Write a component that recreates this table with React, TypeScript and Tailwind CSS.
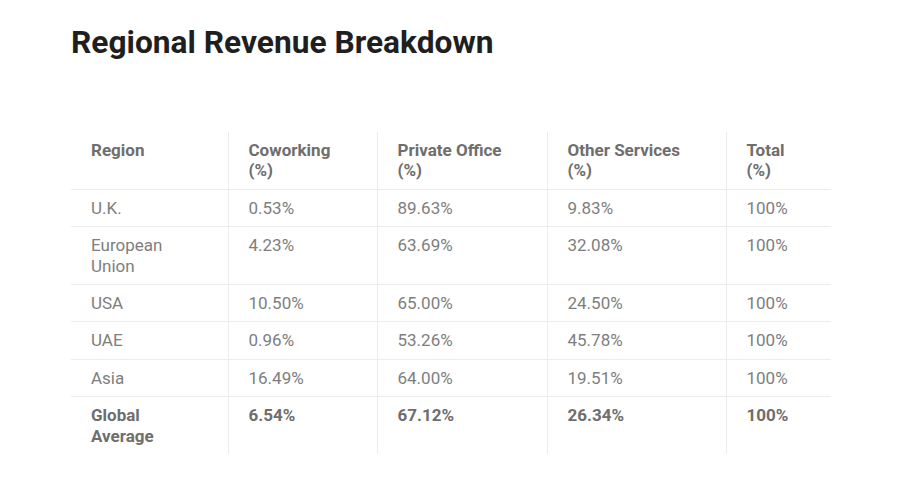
import React from "react";

type Row = { region: React.ReactNode; c: string; p: string; o: string; t: string; bold?: boolean };

const rows: Row[] = [
  { region: "U.K.", c: "0.53%", p: "89.63%", o: "9.83%", t: "100%" },
  { region: <>European<br />Union</>, c: "4.23%", p: "63.69%", o: "32.08%", t: "100%" },
  { region: "USA", c: "10.50%", p: "65.00%", o: "24.50%", t: "100%" },
  { region: "UAE", c: "0.96%", p: "53.26%", o: "45.78%", t: "100%" },
  { region: "Asia", c: "16.49%", p: "64.00%", o: "19.51%", t: "100%" },
  { region: <>Global<br />Average</>, c: "6.54%", p: "67.12%", o: "26.34%", t: "100%", bold: true },
];

const headers: React.ReactNode[] = [
  "Region",
  <>Coworking<br />(%)</>,
  <>Private Office<br />(%)</>,
  <>Other Services<br />(%)</>,
  <>Total<br />(%)</>,
];
const widths = ["w-[157px]", "w-[149px]", "w-[170px]", "w-[179px]", "w-[105px]"];

export default function App() {
  return (
    <div className="min-h-[479px] w-[900px] bg-white px-[71px] pt-[24px]" style={{ fontFamily: "Roboto, 'Liberation Sans', sans-serif" }}>
      <h1 className="text-[31.7px] leading-[38px] font-bold text-[#1f1f1f]">Regional Revenue Breakdown</h1>
      <table className="mt-[70px] w-[760px] table-fixed border-collapse text-[17px] leading-[1.2]">
        <colgroup>
          {widths.map((w, i) => (
            <col key={i} className={w} />
          ))}
        </colgroup>
        <thead>
          <tr className="border-b border-[#ececec]">
            {headers.map((h, i) => (
              <th
                key={i}
                className={`pl-[20px] pr-2 pt-[8px] pb-[8px] text-left align-top font-bold text-[#6e6e6e] ${i < 4 ? "border-r border-[#ececec]" : ""}`}
              >
                {h}
              </th>
            ))}
          </tr>
        </thead>
        <tbody>
          {rows.map((r, ri) => {
            const cells = [r.region, r.c, r.p, r.o, r.t];
            return (
              <tr key={ri} className={ri < rows.length - 1 ? "border-b border-[#ececec]" : ""}>
                {cells.map((v, i) => (
                  <td
                    key={i}
                    className={`pl-[20px] pr-2 pt-[8px] pb-[8px] align-top ${r.bold ? "font-bold text-[#6e6e6e]" : "font-normal text-[#7e7e7e]"} ${i < 4 ? "border-r border-[#ececec]" : ""}`}
                  >
                    {v}
                  </td>
                ))}
              </tr>
            );
          })}
        </tbody>
      </table>
    </div>
  );
}
